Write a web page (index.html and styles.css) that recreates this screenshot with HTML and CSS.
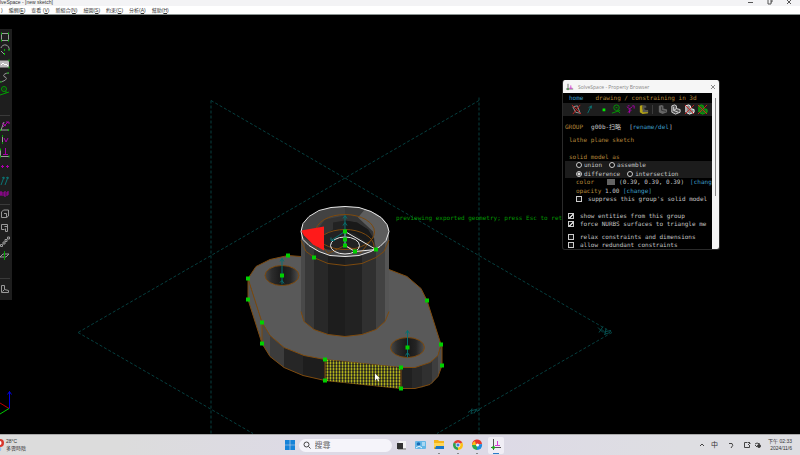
FILE: index.html
```html
<!DOCTYPE html>
<html lang="zh-Hant">
<head>
<meta charset="utf-8">
<title>SolveSpace - [new sketch]</title>
<link rel="stylesheet" href="styles.css">
</head>
<body>
<header class="titlebar">
  <span class="app-title">lveSpace - [new sketch]</span>
  <div class="window-buttons">
    <button aria-label="Minimize"><svg viewBox="0 0 6 6"><path d="M0 2.500h5"/></svg></button>
    <button aria-label="Restore"><svg viewBox="0 0 6 6"><path d="M1 0v4h3V0M4 2h1V0"/></svg></button>
    <button aria-label="Close"><svg viewBox="0 0 6 6"><path d="M1 4l4-4M1 0l4 4"/></svg></button>
  </div>
</header>
<nav class="menubar">
  <button>)</button>
  <button>編輯(<u>E</u>)</button>
  <button>查看 (<u>V</u>)</button>
  <button>新組合(<u>N</u>)</button>
  <button>繪圖(<u>S</u>)</button>
  <button>約束(<u>C</u>)</button>
  <button>分析(<u>A</u>)</button>
  <button>幫助(<u>H</u>)</button>
</nav>

<main class="workspace">
  <svg class="scene" viewBox="0 15 800 420" preserveAspectRatio="xMidYMid slice">
    <defs>
      <pattern id="hatch" width="3" height="3" patternUnits="userSpaceOnUse">
        <rect width="3" height="3" fill="#2b2b20"/>
        <path d="M0 .5h3M.5 0v3" stroke="#77771a"/>
        <rect width="1" height="1" fill="#e6e620"/>
      </pattern>
      <linearGradient id="hole">
        <stop offset="0" stop-color="#484848"/><stop offset=".2" stop-color="#2c2c2c"/>
        <stop offset=".5" stop-color="#181818"/><stop offset=".75" stop-color="#242424"/>
        <stop offset="1" stop-color="#505050"/>
      </linearGradient>
      <clipPath id="rim"><ellipse cx="345" cy="232" rx="44" ry="25"/></clipPath>
      <clipPath id="body"><path d="M301 232V312L304 322 314 330 328 335 345 337 362 335 376 330 385 322 389 312V232Z"/></clipPath>
    </defs>

    <!-- reference planes -->
    <g class="plane">
      <path d="M211 101V434M479 98V434M211 101L612 333M479 101L78 333M78 333L253 434M612 333L437 434"/>
    </g>
    <g class="plane-label">
      <path d="M598 328l5 5M603 327l-4 6M602 330l4 4M606 329l-1 6M606 332l5 -1M604 335l6-2"/>
      <path d="M468 413l4-3M471 414l1-5M472 411l4-1M474 414l3-5M477 412l3-2"/>
    </g>

    <!-- base flange, side walls -->
    <path d="M248 279V300L262 344 270 357 284 368 303 376 325 381 401 389 415 389 430 385 438 377 442 366 441 345 401 340 262 300Z" fill="#202020"/>
    <path d="M248 279V300L262 344V323Z" fill="#565656"/>
    <path d="M262 323V344L270 357V336Z" fill="#4b4b4b"/>
    <path d="M270 336V357L284 368V348Z" fill="#3c3c3c"/>
    <path d="M284 348V368L303 376V356Z" fill="#262626"/>
    <path d="M303 356V376L325 381V360Z" fill="#1d1d1d"/>
    <path d="M412 368V389L422 388V366Z" fill="#282828"/>
    <path d="M422 366V388L432 384V361Z" fill="#303030"/>
    <path d="M432 361V384L438 377V355Z" fill="#3e3e3e"/>
    <path d="M438 355V377L442 366V345Z" fill="#4e4e4e"/>
    <!-- base flange, top face -->
    <path class="edge" fill="#595959" d="M301 257L288 256 270 260 256 267 248 279 262 323 270 336 284 348 304 356 325 360 401 368 415 368 430 363 438 356 441 345 427 301 421 289 407 277 389 270Z"/>
    <path class="edge" fill="none" d="M248 279V300L262 344 270 357 284 368 303 376 325 381 401 389 415 389 430 385 438 377 442 366V345M262 323V344"/>
    <path d="M325 360L401 368V389L325 381Z" fill="url(#hatch)"/>
    <path class="edge" fill="none" d="M325 360V381M401 368V389"/>
    <ellipse class="edge" cx="282" cy="276" rx="17" ry="10" fill="url(#hole)"/>
    <ellipse class="edge" cx="407.500" cy="348" rx="17" ry="10" fill="url(#hole)"/>

    <!-- boss cylinder -->
    <g clip-path="url(#body)">
      <rect x="301" y="225" width="4" height="115" fill="#494949"/>
      <rect x="305" y="225" width="9" height="115" fill="#383838"/>
      <rect x="314" y="225" width="14" height="115" fill="#282828"/>
      <rect x="328" y="225" width="17" height="115" fill="#1d1d1d"/>
      <rect x="345" y="225" width="17" height="115" fill="#222"/>
      <rect x="362" y="225" width="14" height="115" fill="#303030"/>
      <rect x="376" y="225" width="9" height="115" fill="#424242"/>
      <rect x="385" y="225" width="4" height="115" fill="#555"/>
    </g>
    <path class="edge" fill="none" d="M301 312L304 322 314 330 328 335 345 337 362 335 376 330 385 322 389 312M301 241L306 252 316 259 328 264 345 266 362 264 376 258 384 252 389 241"/>
    <g clip-path="url(#rim)">
      <rect x="300" y="206" width="90" height="52" fill="#333"/>
      <path d="M300 206H345V216L325 220 316 232 300 232Z" fill="#424242"/>
      <path d="M345 206H368L358 218 345 215Z" fill="#3a3a3a"/>
      <path d="M368 206H390V258L376 250 373 232 358 218Z" fill="#5d5d5d"/>
      <path d="M333 223L345 221 357 223 368 230 374 240 374 250H318V240L333 230Z" fill="#222"/>
      <path d="M345 221L357 223 368 230 374 240 366 243 355 234 345 232Z" fill="#191919"/>
      <path d="M300 236L318 248 345 254 376 250V260H300Z" fill="#474747"/>
      <ellipse class="edge" cx="345" cy="232.500" rx="29.500" ry="17.500" fill="none"/>
      <ellipse class="edge" cx="345" cy="247" rx="29" ry="17" fill="none"/>
      <path class="edge" fill="none" d="M316 238L328 254M373 238L361 253M328 254L345 246 361 253"/>
    </g>
    <path d="M301 231L324 227V251L313 245 304 236Z" fill="#ff1a1a"/>
    <path class="outline" d="M345 207L359 208 371 212 381 218 387 225 389 232 386 241 380 247 371 252 359 256 345 257 330 256 319 252 309 246 303 240 301 232 303 224 309 217 319 211 331 208Z"/>
    <ellipse class="outline" cx="345" cy="246" rx="14.500" ry="8.500"/>
    <path class="outline" d="M345 232L376 250 355 252 345 246Z"/>

    <g class="normal">
      <path d="M345 246V216M343 219l2-3 2 3M343 226l2-3 2 3M345 232L331 241M331 238v3h4"/>
      <path d="M282 285V259M280 262l2-3 2 3M280 283l2-2 2 3"/>
      <path d="M407.500 358V331M405.500 334l2-3 2 3M405.500 356l2-3 2 3"/>
    </g>
    <g class="points">
      <path d="M345 230v4M345 238v4M345 244v4M355 250v4M376 248v4M314 256v4M288 254v4M282 274v4M248 277v4M248 298v4M262 321v4M262 342v4M325 358v4M325 379v4M401 366v4M401 387v4M407.500 346v4M441 343v4M442 364v4M427 299v4"/>
    </g>
    <text class="preview" x="396" y="220">previewing exported geometry; press Esc to return</text>
    <path d="M375 374v7l2-2 1 3 1-1-1-2h2Z" fill="#fff"/>
    <g fill="none">
      <path d="M9.500 409V392M7.500 395l2-3 2 3" stroke="#0000e0"/>
      <path d="M9 409L0 403.500" stroke="#c00000"/>
      <path d="M9 409L0 414.500" stroke="#00c800"/>
    </g>
  </svg>

  <aside class="toolbar">
    <div class="tools tools-draw">
      <button aria-label="Rectangle"><svg viewBox="0 0 12 12"><path class="w" d="M1.500 2.500h7v7h-7Z"/><path class="gp" d="M1 2.500h1M8 2.500h1M1 9.500h1M8 9.500h1"/></svg></button>
      <button aria-label="Arc"><svg viewBox="0 0 12 12"><path class="w" d="M1 4a4 4 0 0 1 8 2M1 7l3 3"/><path class="gp" d="M4 6h1M8.500 6h1M4 10h1"/></svg></button>
      <button aria-label="Image"><svg viewBox="0 0 12 12"><path d="M0 2.500h9v7H0Z" fill="#bbb"/><path d="M1 7l2-2 2 2 1-1 2 2" stroke="#fff" fill="none"/><path class="gp" d="M8.500 2.500h1M8.500 9.500h1"/></svg></button>
      <button aria-label="Spline"><svg viewBox="0 0 12 12"><path class="w" d="M9 1C4 1 2 4 5 5S6 9 0 10"/><path class="g" d="M7 1h2M0 10h2"/></svg></button>
      <button aria-label="Tangent arc"><svg viewBox="0 0 12 12"><circle class="g" cx="4" cy="4" r="2.500"/><path class="g" d="M4 3.500v1M0 10l9-3M6 6v2"/></svg></button>
    </div>
    <hr>
    <div class="tools tools-constrain">
      <button aria-label="Distance"><svg viewBox="0 0 12 12"><path class="w" d="M1 10L4 2M0 10h9"/><path class="m" d="M2 3l4 3M3 7l5-5M6 2h3v2"/><path class="gp" d="M0 10h1M8 10h1"/></svg></button>
      <button aria-label="Vertical"><svg viewBox="0 0 12 12"><path class="w" d="M2.500 2v8"/><path class="m" d="M4 4l2 4 2-4"/><path class="g" d="M2.500 1v2M2.500 8v2"/></svg></button>
      <button aria-label="Perpendicular"><svg viewBox="0 0 12 12"><path class="w" d="M.500 2v7.500H9"/><path class="m" d="M5.500 1v6M3 7.500h5"/><path class="gp" d="M0 2.500h1M0 9.500h1M8.500 9.500h1"/></svg></button>
      <button aria-label="Equal"><svg viewBox="0 0 12 12"><path class="m" d="M1 5.500h3M2.500 4v3M6 5.500h3M7.500 4v3"/></svg></button>
      <button aria-label="Same orientation"><svg viewBox="0 0 12 12"><path class="c" d="M1 10L4 2M2 3l2-1v2M5 10L8 2M6 3l2-1v2"/></svg></button>
      <button aria-label="Reference"><svg viewBox="0 0 12 12"><path class="m" d="M0 8V4h2v2H0M2 8V6M6 4H4v4h2M4 6h2M9 4H7v4M7 6h2"/></svg></button>
    </div>
    <hr>
    <div class="tools tools-group">
      <button aria-label="Extrude"><svg viewBox="0 0 12 12"><path class="w" d="M1.500 4l2-2h5v6l-2 1.500h-5V4M4 5.500h2.500v4"/></svg></button>
      <button aria-label="Lathe"><svg viewBox="0 0 12 12"><path class="w" d="M1.500 7.500v-5h6v3M1.500 7.500h3M4.500 4.500h3v5h-2v-3"/></svg></button>
      <button aria-label="Repeat"><svg viewBox="0 0 12 12"><path class="w" d="M.500 8.500h2v2h-2ZM3 6h2v2H3ZM5 3.500h2v2H5ZM7.500 1h2v2h-2Z"/></svg></button>
      <button aria-label="Sketch in plane"><svg viewBox="0 0 12 12"><path class="w" d="M0 7l3-3h6L6 7Z"/><path class="g" d="M4.500 1v9"/></svg></button>
    </div>
    <hr>
    <div class="tools tools-view">
      <button aria-label="Nearest isometric"><svg viewBox="0 0 12 12"><path class="w" d="M1.500 2.500h3v4l4 1v2h-7ZM4.500 6.500l-2 2"/></svg></button>
    </div>
  </aside>

  <section class="browser">
    <header class="browser-title">
      <svg viewBox="0 0 10 10"><path d="M2.500 1v8M0 7.500h9" stroke="#555" fill="none"/><path d="M6 3v4M4 6.500h4" stroke="#d030d0" fill="none"/><path d="M2 7.500h1" stroke="#0b0" stroke-width="2"/></svg>
      <span>SolveSpace - Property Browser</span>
      <button aria-label="Close"><svg viewBox="0 0 6 6"><path d="M1 1l4 4M5 1L1 5"/></svg></button>
    </header>
    <div class="browser-main">
      <div class="browser-page">
        <p class="row home"><a href="#home">home</a><span>drawing / constraining in 3d</span></p>
        <div class="icons">
          <button aria-label="Workplanes"><svg viewBox="0 0 12 12"><path class="w" d="M2 3l5-1 3 8-5-1Z"/><path class="r" d="M1 1l10 10M10 1L2 11"/></svg></button>
          <button aria-label="Normals"><svg viewBox="0 0 12 12"><path class="c" d="M4 10L8 2M5 4l3-2v3"/></svg></button>
          <button aria-label="Points"><svg viewBox="0 0 12 12"><path d="M5 5h3v3H5Z" fill="#0e0"/></svg></button>
          <button aria-label="Constructions"><svg viewBox="0 0 12 12"><circle class="g" cx="6" cy="4" r="3"/><path class="g" d="M5 4h2M1 10l9-3M7 7l3 3"/></svg></button>
          <button aria-label="Constraints"><svg viewBox="0 0 12 12"><path class="m" d="M2 3l4 3M4 6l4-3M8 2h2v3M5 6v4M3 9l4-2M3 2h2"/></svg></button>
          <button aria-label="Faces"><svg viewBox="0 0 12 12"><path d="M2 2l3-1v5l6 1v3l-6 1-3-2Z" fill="#b5a416"/><path d="M5 1l4 1v2H7v2l4 1v2H5Z" fill="#555"/></svg></button>
          <hr>
          <button aria-label="Shaded"><svg viewBox="0 0 12 12"><path d="M2 2l3-1 2 1v3l4 1v3l-5 2-4-2Z" fill="#666"/><path d="M5 3v4l5 1" stroke="#333" fill="none"/></svg></button>
          <button aria-label="Edges"><svg viewBox="0 0 12 12"><path d="M2 2l3-1 2 1v3l4 1v3l-5 2-4-2Z" fill="#555" stroke="#ddd"/><path d="M4 3v4l5 2M4 7l3-2" stroke="#ddd" fill="none"/></svg></button>
          <button aria-label="Outlines"><svg viewBox="0 0 12 12"><path d="M2 2l3-1 2 1v3l4 1v3l-5 2-4-2Z" fill="#888" stroke="#fff"/><path class="r" d="M1 1l10 10M11 1L1 11"/></svg></button>
          <button aria-label="Mesh"><svg viewBox="0 0 12 12"><path d="M2 2l3-1 2 1v3l4 1v3l-5 2-4-2Z" fill="#176f17" stroke="#0b0"/><path class="r" d="M1 1l10 10M11 1L1 11"/></svg></button>
        </div>
        <p class="row group-name"><span class="amber">GROUP</span><span>g00b-扫略</span><span>[<a href="#rename">rename/del</a>]</span></p>
        <p class="row kind amber">lathe plane sketch</p>
        <fieldset>
          <legend class="row amber">solid model as</legend>
          <div class="choices">
            <div class="row"><label><input type="radio" name="op">union</label><label><input type="radio" name="op">assemble</label></div>
            <div class="row"><label><input type="radio" name="op" checked>difference</label><label><input type="radio" name="op">intersection</label></div>
          </div>
        </fieldset>
        <div class="details">
          <p class="row color"><span class="amber">color</span><i class="swatch"></i><span>(0.39, 0.39, 0.39)</span><a href="#color">[chang</a></p>
          <p class="row"><span class="amber">opacity</span> 1.00 <a href="#opacity">[change]</a></p>
          <label class="row check"><input type="checkbox">suppress this group's solid model</label>
        </div>
        <div class="checks">
          <label class="row check"><input type="checkbox" checked>show entities from this group</label>
          <label class="row check"><input type="checkbox" checked>force NURBS surfaces to triangle me</label>
        </div>
        <div class="checks">
          <label class="row check"><input type="checkbox">relax constraints and dimensions</label>
          <label class="row check"><input type="checkbox">allow redundant constraints</label>
        </div>
      </div>
      <div class="scroll"><i></i></div>
    </div>
  </section>
</main>

<footer class="taskbar">
  <div class="weather">
    <svg viewBox="0 0 5 16"><path d="M0 2a4 4 0 0 1 0 8" fill="#d8372c"/><path d="M0 4a1.500 2 0 0 1 0 4" fill="#fff"/><path d="M0 10a3 3 0 0 1 0 4" fill="#eef4ff" stroke="#8ab8ee"/></svg>
    <div><p>28°C</p><p>多雲時陰</p></div>
  </div>
  <div class="apps">
    <button aria-label="Start"><svg viewBox="0 0 12 12"><path d="M1 1h4.700v4.700H1ZM6.300 1H11v4.700H6.300ZM1 6.300h4.700V11H1ZM6.300 6.300H11V11H6.300Z" fill="#1683d8"/></svg></button>
    <label class="search"><svg viewBox="0 0 8 8"><circle cx="3.500" cy="3.500" r="2.500"/><path d="M5.500 5.500l2 2"/></svg><input type="text" placeholder="搜尋" aria-label="搜尋"></label>
    <button aria-label="Task view"><svg viewBox="0 0 12 12"><path d="M4 2h7v7H4Z" fill="#f4f4f4"/><path d="M2 4h6v6H2Z" fill="#333"/><path d="M8 9h3v2H3v-1h5Z" fill="#aaa"/></svg></button>
    <button aria-label="Widgets"><svg viewBox="0 0 12 12"><rect x="1" y="2" width="11" height="8" rx="1" fill="#63b6e6"/><circle cx="4.500" cy="5" r="1.800" fill="#1769b5"/><path d="M2 9l3-2 3 2M8 4h3M8 6h3" stroke="#eef8ff" fill="none"/></svg></button>
    <button class="running" aria-label="File Explorer"><svg viewBox="0 0 12 12"><path d="M1 1h4l1 1h5v8H1Z" fill="#f3b51b"/><path d="M1 4h10v4H1Z" fill="#ffd75a"/><path d="M3 7h8v3H2Z" fill="#1878c9"/></svg></button>
    <button class="running" aria-label="Chrome"><svg viewBox="0 0 12 12"><path d="M6 6L1.700 3.500A5 5 0 0 1 10.300 3.500Z" fill="#e33e2f"/><path d="M6 6L10.300 3.500A5 5 0 0 1 6 11Z" fill="#fbc116"/><path d="M6 6V11A5 5 0 0 1 1.700 3.500Z" fill="#2da04b"/><circle cx="6" cy="6" r="2" fill="#3b78e7" stroke="#fff" stroke-width=".8"/></svg></button>
    <button class="running" aria-label="Browser"><svg viewBox="0 0 12 12"><path d="M1 6A5 5 0 0 1 11 5L6 6Z" fill="#e8372d"/><path d="M11 5A5 5 0 0 1 6 11V6Z" fill="#1d8ddf"/><path d="M6 11A5 5 0 0 1 1 6h5Z" fill="#2daa4f"/><path d="M1 6a5 5 0 0 1 3-4l1 4Z" fill="#fbc116"/><circle cx="6.500" cy="6" r="1.500" fill="#fff"/></svg></button>
    <button class="running active" aria-label="SolveSpace"><svg viewBox="0 0 12 12"><path d="M3.500 0v11M1 8.500h10" stroke="#555" fill="none"/><path d="M7.500 2v4M5 6.500h5" stroke="#d838d8" fill="none"/><path d="M2 8.500h3" stroke="#15b515" stroke-width="2"/></svg></button>
  </div>
  <div class="tray">
    <svg viewBox="0 0 8 8"><path d="M2 5l2-2 2 2"/></svg>
    <span class="ime">中</span>
    <svg viewBox="0 0 8 8"><path d="M2 2.500h3Q7 4 4 7"/></svg>
    <svg class="net" viewBox="0 0 8 8"><path d="M4.500 1.500h-3v5h5V4M5 1.500h2M5 4l2-2v1"/></svg>
    <svg viewBox="0 0 8 8"><path d="M1 3l2-1 3 1M1 4l2 2"/><circle cx="5" cy="5" r="1.500" fill="#333"/></svg>
    <div class="clock"><p>下午 02:33</p><p>2024/11/6</p></div>
  </div>
</footer>
</body>
</html>
```
FILE: styles.css
```css
* { box-sizing: border-box; }
body {
  margin: 0;
  height: 100vh;
  display: flex;
  flex-direction: column;
  overflow: hidden;
  background: #000;
  color: #333;
  font: 5px/6px "Liberation Sans", "Noto Sans CJK TC", sans-serif;
}
p, hr, fieldset, legend { margin: 0; padding: 0; border: 0; }
button { margin: 0; padding: 0; border: 0; background: none; color: inherit; font: inherit; }
a { color: #3f9fc8; text-decoration: none; }
svg { display: block; }

/* window chrome */
.titlebar {
  display: flex;
  justify-content: space-between;
  height: 6px;
  background: #f3f3f5;
  line-height: 4px;
}
.window-buttons { display: flex; gap: 13px; padding-right: 8px; }
.window-buttons svg { width: 6px; height: 6px; fill: none; stroke: #555; }
.menubar {
  display: flex;
  gap: 6px;
  height: 9px;
  padding-left: 1px;
  background: #fff;
  border-bottom: 1px solid #8a9290;
  line-height: 8px;
}
.menubar button { flex: none; white-space: nowrap; }

/* drawing area */
.workspace { position: relative; flex: 1; min-height: 0; }
.scene { width: 100%; height: 100%; }
.plane { fill: none; stroke: #063f3f; stroke-dasharray: 3 2; }
.plane-label { fill: none; stroke: #064c4c; }
.edge { stroke: #7d4a0e; }
.outline { fill: none; stroke: #e8e8e8; }
.normal { fill: none; stroke: #087070; }
.points { fill: none; stroke: #00d000; stroke-width: 4; }
.preview { fill: #009a00; font: 6px "DejaVu Sans Mono", monospace; }

.w { fill: none; stroke: #999; }
.g { fill: none; stroke: #00a000; }
.gp { fill: none; stroke: #00b800; stroke-width: 2; }
.m { fill: none; stroke: #a800a8; }
.c { fill: none; stroke: #0b7474; }
.r { fill: none; stroke: #d02020; }

.toolbar {
  position: absolute;
  top: 14px;
  left: 0;
  width: 12px;
  padding-top: 1px;
  padding-bottom: 4px;
  background: #1e1e1e;
}
.toolbar hr { height: 1px; margin-right: 2px; background: #3a3a3a; }
.tools { display: flex; flex-direction: column; }
.tools button { flex: 1; min-height: 0; display: flex; align-items: center; }
.tools svg { width: 12px; height: 12px; }
.tools-draw { height: 68px; margin-bottom: 17px; }
.tools-constrain { height: 82px; margin: 3px 0; }
.tools-group { height: 56px; margin: 2px 0 15px; }
.tools-view { height: 14px; margin-top: 3px; }

/* property browser */
.browser {
  position: absolute;
  top: 65px;
  right: 80px;
  width: 158px;
  height: 170px;
  display: flex;
  flex-direction: column;
  overflow: hidden;
  border: 1px solid #2a2a2a;
  border-top: 0;
  border-radius: 3px;
  background: #000;
  color: #c4c4c4;
  font: 6px/8px "DejaVu Sans Mono", "Noto Sans CJK SC", monospace;
}
.browser-title {
  flex: none;
  display: flex;
  align-items: center;
  gap: 4px;
  height: 13px;
  padding: 0 3px;
  background: #f6f6f6;
  color: #888;
  font-family: "Open Sans", sans-serif;
  font-size: 5px;
}
.browser-title svg { width: 8px; height: 8px; }
.browser-title button { margin-left: auto; }
.browser-title button svg { width: 6px; height: 6px; fill: none; stroke: #888; }
.browser-main { flex: 1; min-height: 0; display: flex; }
.browser-page { flex: 1; min-width: 0; overflow: hidden; white-space: nowrap; }
.scroll { flex: none; width: 7px; padding: 5px 3px; background: #f4f4f4; }
.scroll i { display: block; width: 1px; height: 98px; background: #888; }
.row { display: block; height: 8px; white-space: pre; }
.amber { color: #b5873a; }
.home { display: flex; gap: 12px; height: 10px; padding: 1px 0 0 6px; color: #b5873a; }
.icons {
  display: flex;
  align-items: center;
  justify-content: space-between;
  height: 13px;
  padding: 0 4px 0 8px;
  background: #1e1e1e;
}
.icons svg { width: 11px; height: 11px; }
.icons button { flex: none; width: 11px; }
.icons hr { flex: none; width: 1px; height: 9px; margin: 0 1px; background: #3c3c3c; }
.group-name { display: flex; gap: 8px; margin-top: 7px; padding-left: 2px; }
.kind { margin-top: 5px; padding-left: 6px; }
fieldset { min-width: 0; margin-top: 9px; }
legend { padding-left: 6px; }
.choices {
  display: grid;
  gap: 1px;
  margin-left: 2px;
  padding-left: 11px;
  background: #1c1c1c;
}
.choices .row { display: flex; gap: 7px; }
.choices label { display: flex; align-items: center; gap: 2px; }
input { margin: 0; }
input[type="radio"], input[type="checkbox"] {
  appearance: none;
  flex: none;
  width: 6px;
  height: 6px;
  border: 1px solid #ccc;
  background: #111;
}
input[type="radio"] { border-radius: 50%; }
input[type="radio"]:checked { background: radial-gradient(#ddd 1px, #111 2px); }
input[type="checkbox"]:checked { background: linear-gradient(135deg, #111 40%, #ccc 40%, #ccc 65%, #111 65%); }
.details { padding-left: 13px; }
.color { display: flex; align-items: center; margin-bottom: 1px; }
.swatch { flex: none; width: 8px; height: 6px; margin: 0 4px 0 13px; background: #636363; }
.color a { margin-left: 6px; }
.check { display: flex; align-items: center; gap: 6px; }
.checks { margin-top: 9px; padding-left: 5px; }
.checks + .checks { margin-top: 5px; }

/* taskbar */
.taskbar {
  flex: none;
  display: grid;
  grid-template-columns: 1fr auto 1fr;
  align-items: center;
  height: 21px;
  border-top: 1px solid #aaa;
  background: linear-gradient(90deg, #dcdcdc 15%, #dddae6 40%, #dddae6 62%, #dedee2 85%);
}
.weather { display: flex; gap: 1px; align-items: center; }
.weather svg { width: 5px; height: 16px; }
.weather p { line-height: 7px; }
.apps { display: flex; align-items: center; gap: 3px; margin-right: 15px; }
.apps button { position: relative; width: 16px; height: 17px; display: grid; place-items: center; }
.apps button svg { width: 12px; height: 12px; }
.running::after {
  content: "";
  position: absolute;
  bottom: 0;
  left: 7px;
  width: 2px;
  height: 1px;
  background: #888;
}
.apps .active { border-radius: 2px; background: #f0eef5; }
.active::after { left: 5px; width: 6px; background: #2b7dc9; }
.search {
  display: flex;
  align-items: center;
  gap: 4px;
  width: 93px;
  height: 13px;
  margin: 0 -2px;
  padding-left: 4px;
  border-radius: 7px;
  background: #f5f4fa;
}
.search svg { flex: none; width: 8px; height: 8px; fill: none; stroke: #444; }
.search input {
  width: 100%;
  min-width: 0;
  padding: 0;
  border: 0;
  outline: 0;
  background: none;
  font: 8px/12px "Noto Sans CJK TC", sans-serif;
}
.search input::placeholder { color: #666; }
.tray { display: flex; align-items: center; justify-content: flex-end; gap: 3px; padding-right: 8px; color: #333; }
.tray svg { width: 8px; height: 8px; fill: none; stroke: #444; }
.ime { margin: 0 6px 0 2px; font-size: 7px; }
.net { margin-left: 5px; }
.clock { margin-left: 3px; text-align: right; }
.clock p { line-height: 7px; }
```
